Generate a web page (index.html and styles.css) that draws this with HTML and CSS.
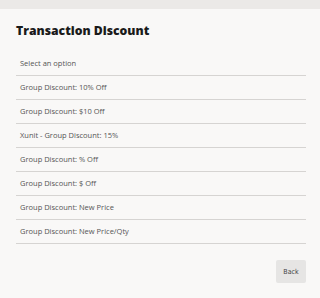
FILE: index.html
```html
<!DOCTYPE html>
<html>
<head>
<meta charset="utf-8">
<link rel="stylesheet" href="styles.css">
</head>
<body>
<div class="strip"></div>
<div class="panel">
  <h1 class="title">Transaction Discount</h1>
  <ul class="options">
    <li class="option">Select an option</li>
    <li class="option">Group Discount: 10% Off</li>
    <li class="option">Group Discount: $10 Off</li>
    <li class="option">Xunit - Group Discount: 15%</li>
    <li class="option">Group Discount: % Off</li>
    <li class="option">Group Discount: $ Off</li>
    <li class="option">Group Discount: New Price</li>
    <li class="option">Group Discount: New Price/Qty</li>
  </ul>
  <div class="actions">
    <button class="back">Back</button>
  </div>
</div>
</body>
</html>
```
FILE: styles.css
```css
html, body {
  margin: 0;
  padding: 0;
  background: #f9f8f7;
  font-family: "Open Sans", "Noto Sans", sans-serif;
}
.strip {
  height: 9px;
  background: #ebe9e7;
}
.panel {
  padding: 15px 14px 0 16px;
}
.title {
  margin: 0;
  font-family: "Open Sans", "Noto Sans", sans-serif;
  font-size: 12.2px;
  font-weight: 800;
  color: #1a1a1a;
  line-height: 14px;
}
.options {
  list-style: none;
  margin: 14px 0 0 0;
  padding: 0;
}
.option {
  height: 23px;
  line-height: 23px;
  border-bottom: 1px solid #d6d4d2;
  padding-left: 4px;
  font-size: 7.5px;
  color: #555;
}
.actions {
  display: flex;
  justify-content: flex-end;
  margin-top: 16px;
}
.back {
  width: 30px;
  height: 23px;
  border: none;
  border-radius: 2px;
  background: #e6e5e4;
  font-family: "DejaVu Sans Condensed", "DejaVu Sans", sans-serif;
  font-size: 7px;
  color: #444;
  padding: 0;
}
```
